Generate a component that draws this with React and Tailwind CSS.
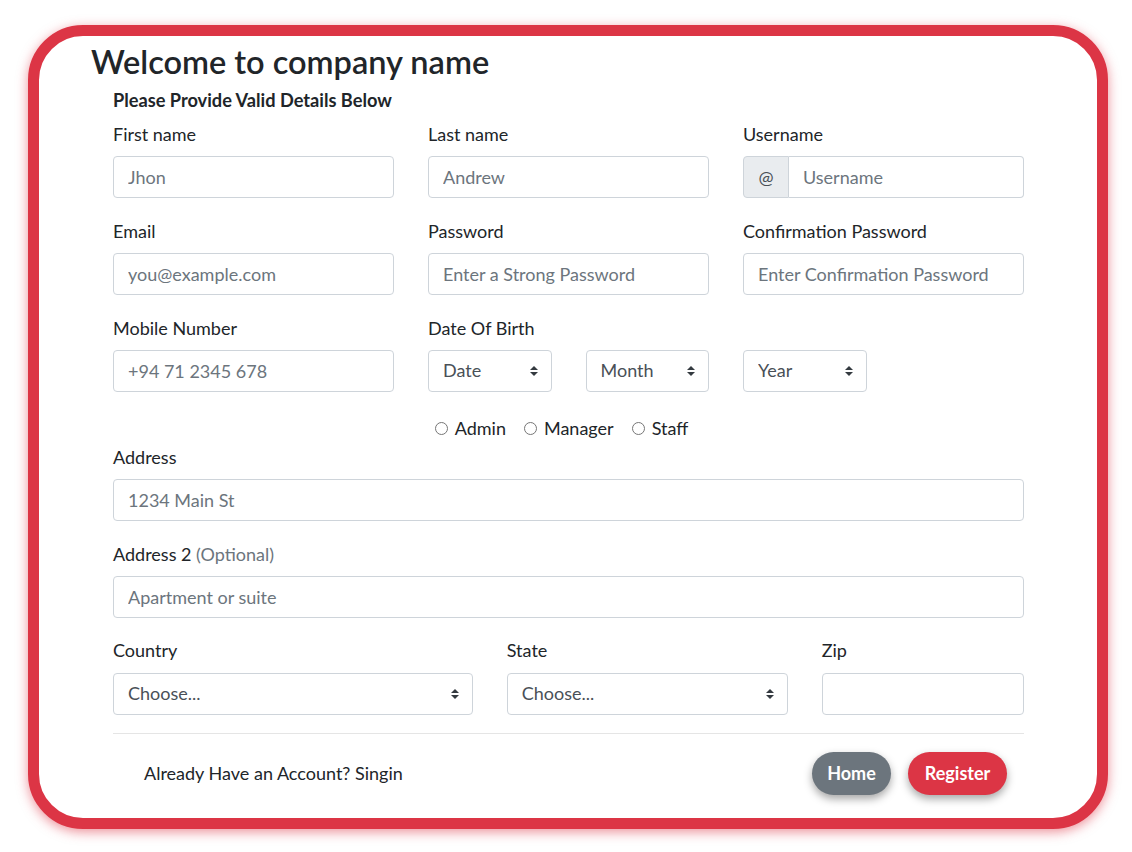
import React from "react";

const font = { fontFamily: "Lato, 'Noto Sans', 'Liberation Sans', sans-serif" };

const inputCls =
  "block w-full h-[42px] rounded-[4px] border border-[#ced4da] bg-white px-[14px] text-[18px] text-[#495057] placeholder:text-[#6c757d] outline-none";

function Label({ children, className = "" }) {
  return (
    <label className={`block h-[26.4px] leading-[26.4px] mb-[8.8px] text-[18px] text-[#212529] ${className}`}>
      {children}
    </label>
  );
}

function Arrows() {
  return (
    <svg
      className="pointer-events-none absolute right-[14px] top-1/2 -translate-y-1/2"
      width="8"
      height="10"
      viewBox="0 0 4 5"
    >
      <path fill="#343a40" d="M2 0L0 2h4zm0 5L0 3h4z" />
    </svg>
  );
}

function Select({ text }) {
  return (
    <div className="relative">
      <select className={`${inputCls} appearance-none`} defaultValue="">
        <option value="">{text}</option>
      </select>
      <Arrows />
    </div>
  );
}

function Field({ label, placeholder, type = "text" }) {
  return (
    <div>
      <Label>{label}</Label>
      <input type={type} className={inputCls} placeholder={placeholder} />
    </div>
  );
}

function Radio({ label }) {
  return (
    <label className="flex items-center gap-[7px] text-[18px] text-[#212529]">
      <input
        type="radio"
        name="role"
        className="appearance-none w-[13px] h-[13px] rounded-full border border-[#767676] bg-white"
      />
      {label}
    </label>
  );
}

export default function App() {
  return (
    <div className="min-h-screen bg-white pt-[25px] pl-[28px]" style={font}>
      <div className="w-[1080px] h-[804px] rounded-[55px] border-[11px] border-[#dc3545] bg-white shadow-[0_3px_12px_rgba(220,53,69,0.55)]">
        <h2 className="pl-[52px] pt-[6px] text-[32.5px] leading-[40px] font-semibold text-[#212529]">
          Welcome to company name
        </h2>
        <form className="pl-[74px] pr-[73px]" onSubmit={(e) => e.preventDefault()}>
          <h6 className="mt-[5px] mb-[8px] h-[26px] leading-[26px] text-[18.2px] font-bold text-[#212529]">
            Please Provide Valid Details Below
          </h6>

          <div className="grid grid-cols-3 gap-x-[34px] gap-y-[19.6px]">
            <Field label="First name" placeholder="Jhon" />
            <Field label="Last name" placeholder="Andrew" />
            <div>
              <Label>Username</Label>
              <div className="flex h-[42px]">
                <span className="flex w-[46px] shrink-0 items-center justify-center rounded-l-[4px] border border-[#ced4da] bg-[#e9ecef] text-[18px] text-[#495057]">
                  @
                </span>
                <input
                  className="block w-full h-[42px] rounded-r-[4px] border border-l-0 border-[#ced4da] bg-white px-[14px] text-[18px] text-[#495057] placeholder:text-[#6c757d] outline-none"
                  placeholder="Username"
                />
              </div>
            </div>

            <Field label="Email" placeholder="you@example.com" type="email" />
            <Field label="Password" placeholder="Enter a Strong Password" type="password" />
            <Field label="Confirmation Password" placeholder="Enter Confirmation Password" type="password" />
          </div>

          <div className="mt-[19.6px] grid grid-cols-6 gap-x-[34px]">
            <div className="col-span-2">
              <Field label="Mobile Number" placeholder="+94 71 2345 678" />
            </div>
            <div>
              <Label className="whitespace-nowrap">Date Of Birth</Label>
              <Select text="Date" />
            </div>
            <div>
              <Label>&nbsp;</Label>
              <Select text="Month" />
            </div>
            <div>
              <Label>&nbsp;</Label>
              <Select text="Year" />
            </div>
          </div>

          <div className="mt-[24px] flex h-[26px] justify-center gap-x-[18px] pr-[14px]">
            <Radio label="Admin" />
            <Radio label="Manager" />
            <Radio label="Staff" />
          </div>

          <div className="mt-[2px]">
            <Field label="Address" placeholder="1234 Main St" />
          </div>

          <div className="mt-[19.6px]">
            <Label>
              Address 2 <span className="text-[#6c757d]">(Optional)</span>
            </Label>
            <input className={inputCls} placeholder="Apartment or suite" />
          </div>

          <div className="mt-[19.6px] grid grid-cols-12 gap-x-[34px]">
            <div className="col-span-5">
              <Label>Country</Label>
              <Select text="Choose..." />
            </div>
            <div className="col-span-4">
              <Label>State</Label>
              <Select text="Choose..." />
            </div>
            <div className="col-span-3">
              <Label>Zip</Label>
              <input className={inputCls} />
            </div>
          </div>

          <hr className="mt-[18px] border-0 border-t border-black/10" />

          <div className="mt-[18px] flex items-center justify-between pl-[31px] pr-[17px]">
            <span className="text-[18px] text-[#212529]">Already Have an Account? Singin</span>
            <div className="flex gap-[17px]">
              <button
                type="button"
                className="h-[43px] w-[79px] rounded-full bg-[#6c757d] text-[18px] font-bold text-white shadow-[0_4px_8px_rgba(0,0,0,0.35)]"
              >
                Home
              </button>
              <button
                type="submit"
                className="h-[43px] w-[99px] rounded-full bg-[#dc3545] text-[18px] font-bold text-white shadow-[0_4px_8px_rgba(0,0,0,0.35)]"
              >
                Register
              </button>
            </div>
          </div>
        </form>
      </div>
    </div>
  );
}
